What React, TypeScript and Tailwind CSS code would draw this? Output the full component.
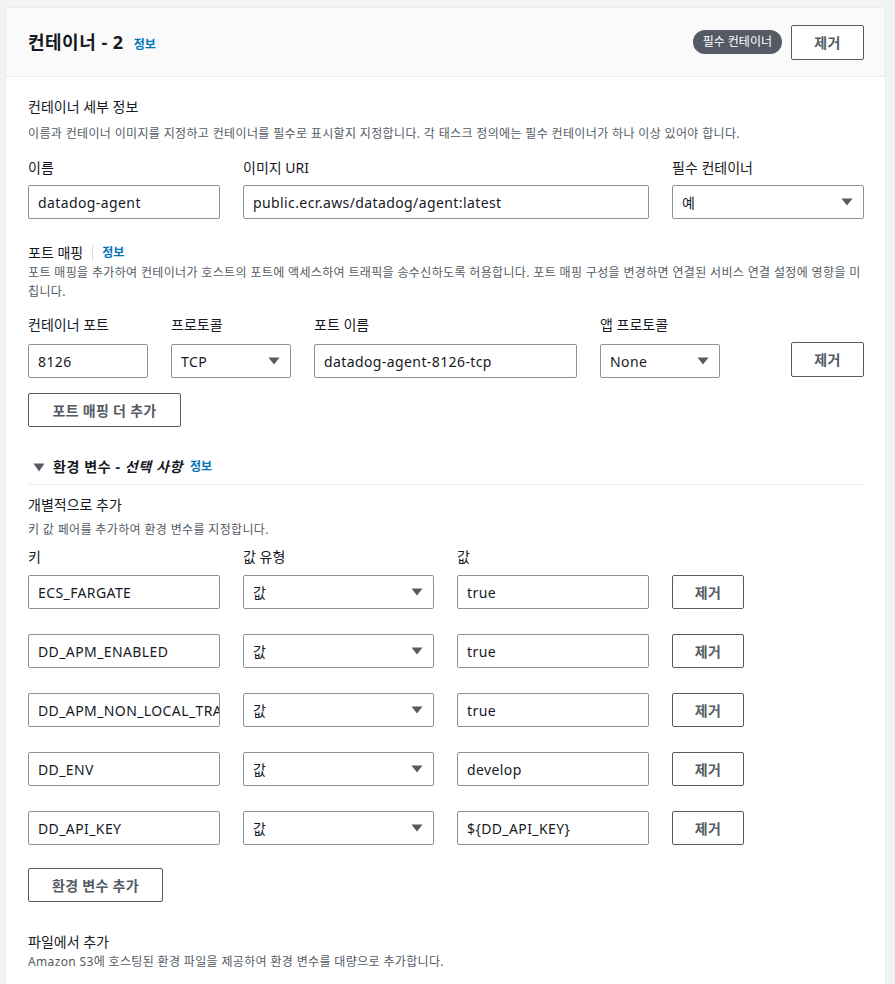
import React from 'react';

const FONT = { fontFamily: '"Noto Sans", "Noto Sans CJK KR", sans-serif' };

const Caret = () => (
  <svg width="12" height="8" viewBox="0 0 12 8" className="shrink-0">
    <path d="M0.5 0.5 H11.5 L6 7.5 Z" fill="#545b64" />
  </svg>
);

const TextBox: React.FC<{ value: string; w: string }> = ({ value, w }) => (
  <div className={`${w} h-[34px] shrink-0 border border-[#879596] rounded-[2px] bg-white flex items-center pl-[9px] pr-[4px] text-[14px] tracking-[0.4px] text-[#16191f] overflow-hidden whitespace-nowrap`}>
    {value}
  </div>
);

const SelectBox: React.FC<{ value: string; w: string }> = ({ value, w }) => (
  <div className={`${w} h-[34px] shrink-0 border border-[#879596] rounded-[2px] bg-white flex items-center justify-between pl-[9px] pr-[10px] text-[14px] tracking-[0.4px] text-[#16191f]`}>
    <span>{value}</span>
    <Caret />
  </div>
);

const Btn: React.FC<{ label: string; w: string; h?: string }> = ({ label, w, h = 'h-[35px]' }) => (
  <button className={`${w} ${h} shrink-0 border border-[#545b64] rounded-[2px] bg-white text-[14px] font-bold tracking-[0.3px] text-[#545b64] flex items-center justify-center`}>
    {label}
  </button>
);

const Label: React.FC<{ text: string; w: string }> = ({ text, w }) => (
  <div className={`${w} shrink-0 text-[14px] leading-[22px] text-[#16191f]`}>{text}</div>
);

const envRows = [
  ['ECS_FARGATE', 'true'],
  ['DD_APM_ENABLED', 'true'],
  ['DD_APM_NON_LOCAL_TRAFFIC', 'true'],
  ['DD_ENV', 'develop'],
  ['DD_API_KEY', '${DD_API_KEY}'],
];

export default function App() {
  return (
    <div className="min-h-screen bg-[#f2f3f3] pt-[7px] pl-[5px] pr-[9px]" style={FONT}>
      <div className="bg-white border border-[#eaeded] min-h-[980px]">
        {/* header */}
        <div className="h-[69px] bg-[#fafafa] border-b border-[#eaeded] flex items-center justify-between pl-[22px] pr-[21px]">
          <div className="flex items-baseline gap-[10px]">
            <span className="text-[18px] font-bold tracking-[0.5px] text-[#16191f]">컨테이너 - 2</span>
            <span className="text-[12px] font-bold text-[#0073bb]">정보</span>
          </div>
          <div className="flex items-center gap-[9px]">
            <span className="h-[24px] px-[10px] rounded-full bg-[#545b64] text-white text-[12px] flex items-center">필수 컨테이너</span>
            <Btn label="제거" w="w-[73px]" />
          </div>
        </div>

        {/* body */}
        <div className="pl-[22px] pr-[21px] pt-[19px]">
          <div className="text-[14px] leading-[22px] text-[#16191f]">컨테이너 세부 정보</div>
          <div className="mt-[7px] text-[12px] leading-[18px] tracking-[0.35px] text-[#545b64]">
            이름과 컨테이너 이미지를 지정하고 컨테이너를 필수로 표시할지 지정합니다. 각 태스크 정의에는 필수 컨테이너가 하나 이상 있어야 합니다.
          </div>
          <div className="mt-[14px] flex gap-[23px]">
            <Label text="이름" w="w-[192px]" />
            <Label text="이미지 URI" w="w-[406px]" />
            <Label text="필수 컨테이너" w="w-[192px]" />
          </div>
          <div className="mt-[6px] flex gap-[23px]">
            <TextBox value="datadog-agent" w="w-[192px]" />
            <TextBox value="public.ecr.aws/datadog/agent:latest" w="w-[406px]" />
            <SelectBox value="예" w="w-[192px]" />
          </div>

          {/* port mapping */}
          <div className="mt-[24px] flex items-center text-[14px] leading-[20px]">
            <span className="text-[#16191f]">포트 매핑</span>
            <span className="mx-[9px] h-[16px] w-px bg-[#d5dbdb]" />
            <span className="text-[12px] font-bold text-[#0073bb]">정보</span>
          </div>
          <div className="text-[12px] leading-[19px] tracking-[0.35px] text-[#545b64]">
            포트 매핑을 추가하여 컨테이너가 호스트의 포트에 액세스하여 트래픽을 송수신하도록 허용합니다. 포트 매핑 구성을 변경하면 연결된 서비스 연결 설정에 영향을 미칩니다.
          </div>
          <div className="mt-[13px] flex gap-[23px]">
            <Label text="컨테이너 포트" w="w-[120px]" />
            <Label text="프로토콜" w="w-[120px]" />
            <Label text="포트 이름" w="w-[263px]" />
            <Label text="앱 프로토콜" w="w-[120px]" />
          </div>
          <div className="mt-[6px] flex gap-[23px] items-end">
            <TextBox value="8126" w="w-[120px]" />
            <SelectBox value="TCP" w="w-[120px]" />
            <TextBox value="datadog-agent-8126-tcp" w="w-[263px]" />
            <SelectBox value="None" w="w-[120px]" />
            <div className="ml-auto mb-px">
              <Btn label="제거" w="w-[73px]" />
            </div>
          </div>
          <div className="mt-[15px]">
            <Btn label="포트 매핑 더 추가" w="w-[153px]" h="h-[34px]" />
          </div>

          {/* env vars */}
          <div className="mt-[29px] pb-[6px] border-b border-[#eaeded] flex items-center text-[14px] leading-[22px] font-bold text-[#16191f] pl-[5px]">
            <svg width="12" height="9" viewBox="0 0 12 9" className="mr-[8px]">
              <path d="M0.5 0.5 H11.5 L6 8.5 Z" fill="#545b64" />
            </svg>
            <span className="tracking-[0.6px]">환경 변수 - <i>선택 사항</i></span>
            <span className="ml-[7px] text-[12px] text-[#0073bb]">정보</span>
          </div>
          <div className="mt-[9px] text-[14px] leading-[22px] text-[#16191f]">개별적으로 추가</div>
          <div className="mt-[5px] text-[12px] leading-[18px] tracking-[0.35px] text-[#545b64]">키 값 페어를 추가하여 환경 변수를 지정합니다.</div>
          <div className="mt-[7px] flex gap-[23px]">
            <Label text="키" w="w-[192px]" />
            <Label text="값 유형" w="w-[191px]" />
            <Label text="값" w="w-[192px]" />
          </div>
          <div className="mt-[7px] flex flex-col gap-[25px]">
            {envRows.map(([k, v]) => (
              <div key={k} className="flex gap-[23px] items-center">
                <TextBox value={k} w="w-[192px]" />
                <SelectBox value="값" w="w-[191px]" />
                <TextBox value={v} w="w-[192px]" />
                <Btn label="제거" w="w-[72px]" h="h-[34px]" />
              </div>
            ))}
          </div>
          <div className="mt-[23px]">
            <Btn label="환경 변수 추가" w="w-[135px]" h="h-[34px]" />
          </div>

          <div className="mt-[29px] text-[14px] leading-[22px] text-[#16191f]">파일에서 추가</div>
          <div className="text-[12px] leading-[18px] tracking-[0.35px] text-[#545b64]">Amazon S3에 호스팅된 환경 파일을 제공하여 환경 변수를 대량으로 추가합니다.</div>
        </div>
      </div>
    </div>
  );
}
